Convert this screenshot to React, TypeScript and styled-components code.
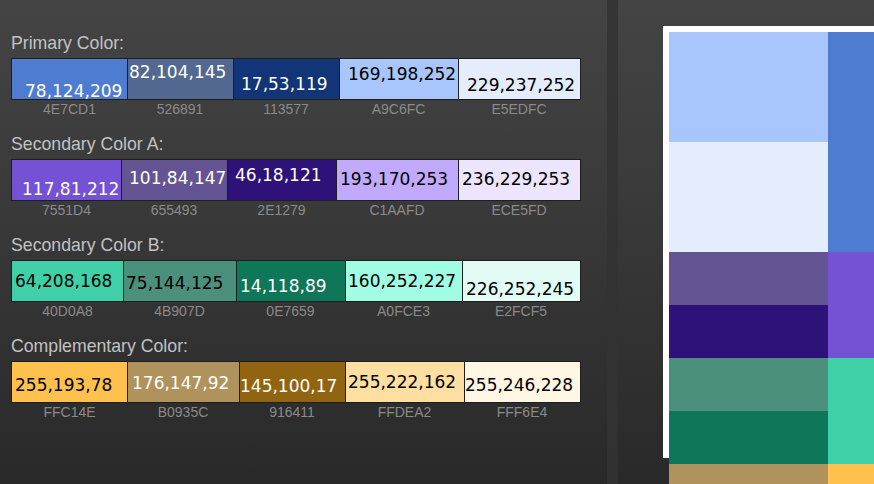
import React from 'react'
import styled, { createGlobalStyle } from 'styled-components'

type Swatch = {
  hex: string
  rgb: string
  w: number
  pl: number
  pt: number
  light?: boolean
}

type Palette = {
  title: string
  swatches: Swatch[]
}

const palettes: Palette[] = [
  {
    title: 'Primary Color:',
    swatches: [
      { hex: '4E7CD1', rgb: '78,124,209', w: 115, pl: 13, pt: 25 },
      { hex: '526891', rgb: '82,104,145', w: 106, pl: 1, pt: 6 },
      { hex: '113577', rgb: '17,53,119', w: 106, pl: 7, pt: 18 },
      { hex: 'A9C6FC', rgb: '169,198,252', w: 119, pl: 8, pt: 8.3, light: true },
      { hex: 'E5EDFC', rgb: '229,237,252', w: 122, pl: 8, pt: 19.3, light: true },
    ],
  },
  {
    title: 'Secondary Color A:',
    swatches: [
      { hex: '7551D4', rgb: '117,81,212', w: 109, pl: 10, pt: 22.3 },
      { hex: '655493', rgb: '101,84,147', w: 106, pl: 7, pt: 10.7 },
      { hex: '2E1279', rgb: '46,18,121', w: 109, pl: 7, pt: 8 },
      { hex: 'C1AAFD', rgb: '193,170,253', w: 122, pl: 3, pt: 11.7, light: true },
      { hex: 'ECE5FD', rgb: '236,229,253', w: 122, pl: 3, pt: 12.3, light: true },
    ],
  },
  {
    title: 'Secondary Color B:',
    swatches: [
      { hex: '40D0A8', rgb: '64,208,168', w: 111, pl: 3, pt: 13, light: true },
      { hex: '4B907D', rgb: '75,144,125', w: 113, pl: 2, pt: 14.7, light: true },
      { hex: '0E7659', rgb: '14,118,89', w: 109, pl: 3, pt: 18 },
      { hex: 'A0FCE3', rgb: '160,252,227', w: 117, pl: 2, pt: 13, light: true },
      { hex: 'E2FCF5', rgb: '226,252,245', w: 118, pl: 3, pt: 21.3, light: true },
    ],
  },
  {
    title: 'Complementary Color:',
    swatches: [
      { hex: 'FFC14E', rgb: '255,193,78', w: 115, pl: 3, pt: 16, light: true },
      { hex: 'B0935C', rgb: '176,147,92', w: 112, pl: 4, pt: 13.7 },
      { hex: '916411', rgb: '145,100,17', w: 106, pl: 0, pt: 17 },
      { hex: 'FFDEA2', rgb: '255,222,162', w: 119, pl: 2, pt: 13, light: true },
      { hex: 'FFF6E4', rgb: '255,246,228', w: 116, pl: 0, pt: 16.3, light: true },
    ],
  },
]

// preview blocks on the right: two shades stacked beside the base colour
const preview = [
  { h: 220, shades: ['A9C6FC', 'E5EDFC'], base: '4E7CD1' },
  { h: 106, shades: ['655493', '2E1279'], base: '7551D4' },
  { h: 106, shades: ['4B907D', '0E7659'], base: '40D0A8' },
  { h: 106, shades: ['B0935C', '916411'], base: 'FFC14E' },
]

const GlobalStyle = createGlobalStyle`
  html, body {
    margin: 0;
    height: 100%;
    overflow: hidden;
  }
  body {
    background: #2a2a2a;
  }
`

const App = () => {
  return (
    <>
      <GlobalStyle />
      <StyledPage>
        <StyledPalettes>
          {palettes.map((p) => (
            <StyledSection key={p.title}>
              <StyledTitle>{p.title}</StyledTitle>
              <StyledRow>
                {p.swatches.map((s) => (
                  <StyledCell
                    key={s.hex}
                    $w={s.w}
                    $bg={s.hex}
                    $pl={s.pl}
                    $pt={s.pt}
                    $light={s.light}
                  >
                    {s.rgb}
                  </StyledCell>
                ))}
              </StyledRow>
              <StyledLabels>
                {p.swatches.map((s) => (
                  <StyledLabel key={s.hex} $w={s.w}>
                    {s.hex}
                  </StyledLabel>
                ))}
              </StyledLabels>
            </StyledSection>
          ))}
        </StyledPalettes>

        <StyledDivider />

        <StyledPreviewArea>
          <StyledFrame>
            {preview.map((g) => (
              <StyledGroup key={g.base} $h={g.h}>
                <StyledShades>
                  {g.shades.map((c) => (
                    <StyledShade key={c} $bg={c} />
                  ))}
                </StyledShades>
                <StyledBase $bg={g.base} />
              </StyledGroup>
            ))}
          </StyledFrame>
        </StyledPreviewArea>
      </StyledPage>
    </>
  )
}

const StyledPage = styled.div`
  display: flex;
  height: 100vh;
  background: linear-gradient(to bottom, #444444 0%, #3a3a3a 40%, #292929 100%);
`

const StyledPalettes = styled.div`
  width: 607px;
  flex: none;
  box-sizing: border-box;
  padding: 33px 0 0 11px;
`

const StyledSection = styled.section`
  width: 570px;
  margin-bottom: 17px;
`

const StyledTitle = styled.h2`
  margin: 0 0 5px;
  font-family: 'Liberation Sans', Arial, sans-serif;
  font-size: 17.7px;
  font-weight: 400;
  line-height: 20px;
  color: #c2c2c2;
`

const StyledRow = styled.div`
  display: flex;
  height: 42px;
  box-sizing: border-box;
  border: 1px solid #1e1e1e;
  overflow: hidden;
`

const StyledCell = styled.div<{
  $w: number
  $bg: string
  $pl: number
  $pt: number
  $light?: boolean
}>`
  flex: none;
  width: ${({ $w }) => $w}px;
  height: 100%;
  box-sizing: border-box;
  border-left: 1px solid #1e1e1e;
  background: #${({ $bg }) => $bg};
  padding: ${({ $pt }) => $pt}px 0 0 ${({ $pl }) => $pl}px;
  overflow: hidden;
  white-space: nowrap;
  font-family: 'DejaVu Sans', sans-serif;
  font-size: 17px;
  line-height: 15px;
  color: ${({ $light }) => ($light ? '#000' : '#fff')};

  &:first-child {
    border-left: none;
  }
`

const StyledLabels = styled.div`
  display: flex;
  padding: 0 1px;
  margin-top: 1px;
`

const StyledLabel = styled.div<{ $w: number }>`
  flex: none;
  width: ${({ $w }) => $w}px;
  text-align: center;
  font-family: 'Liberation Sans', Arial, sans-serif;
  font-size: 14px;
  line-height: 16px;
  color: #8a8a8a;
`

const StyledDivider = styled.div`
  width: 11px;
  flex: none;
  background: linear-gradient(to bottom, #353535, #313131);
`

const StyledPreviewArea = styled.div`
  flex: 1;
  min-width: 0;
  padding: 26px 0 0 45px;
  overflow: hidden;
`

const StyledFrame = styled.div`
  height: 432px;
  box-sizing: border-box;
  background: #fff;
  padding: 6px 0 0 6px;
`

const StyledGroup = styled.div<{ $h: number }>`
  display: grid;
  grid-template-columns: 159px 1fr;
  height: ${({ $h }) => $h}px;
`

const StyledShades = styled.div`
  display: flex;
  flex-direction: column;
`

const StyledShade = styled.div<{ $bg: string }>`
  flex: 1;
  background: #${({ $bg }) => $bg};
`

const StyledBase = styled.div<{ $bg: string }>`
  background: #${({ $bg }) => $bg};
`

export default App
